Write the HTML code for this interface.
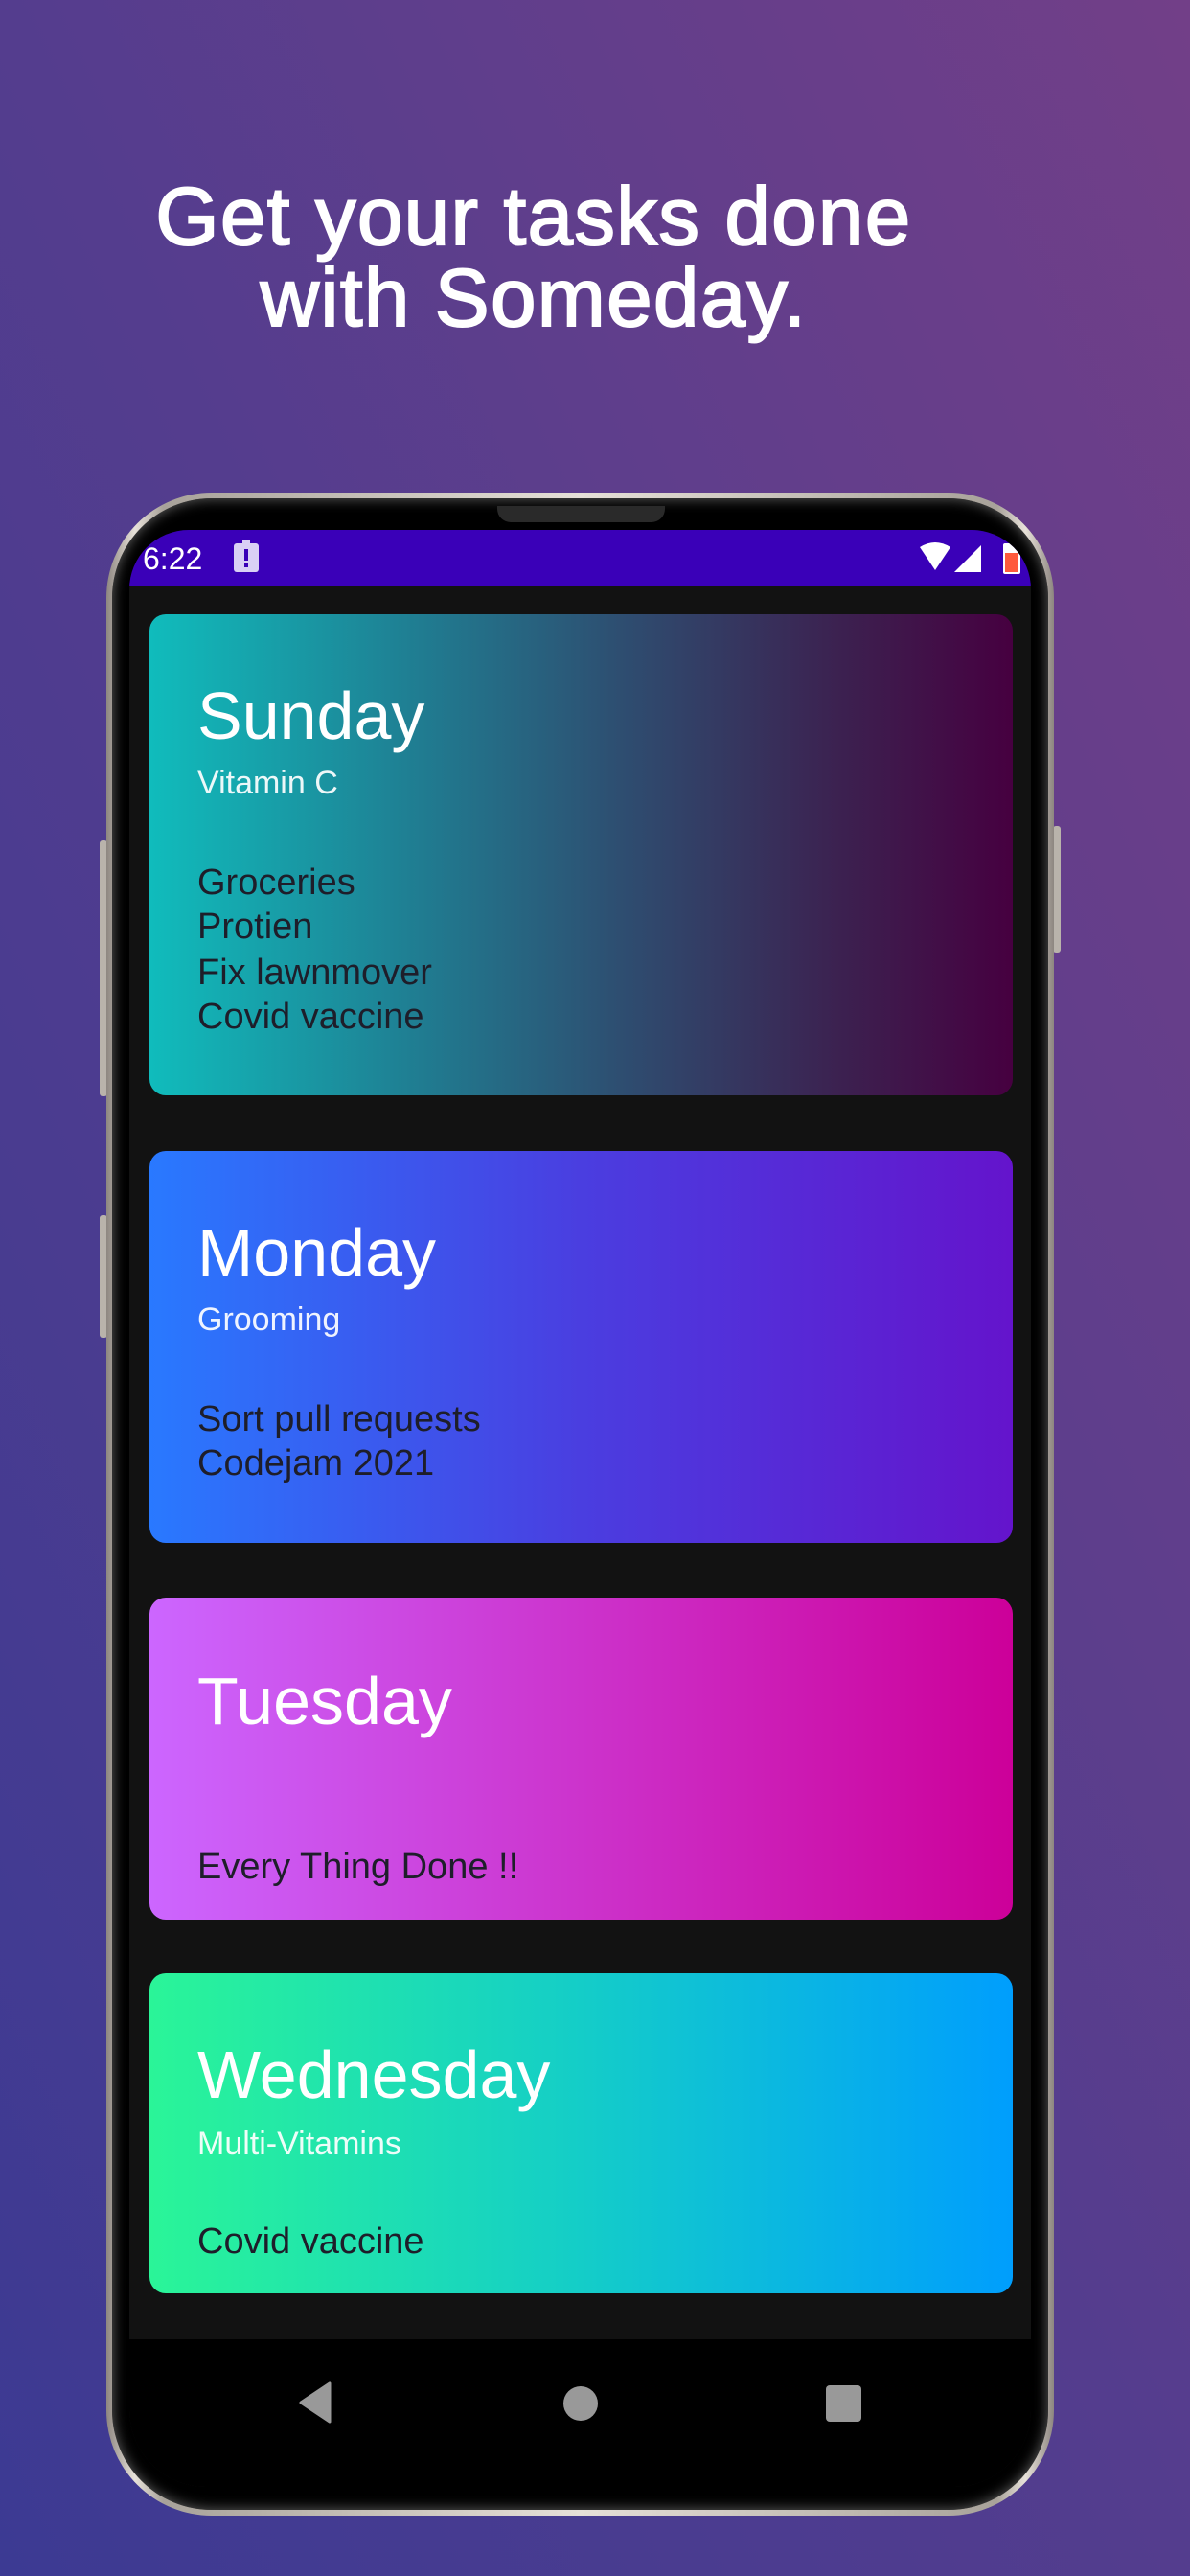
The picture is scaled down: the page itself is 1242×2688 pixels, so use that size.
<!DOCTYPE html>
<html><head><meta charset="utf-8"><style>
*{margin:0;padding:0;box-sizing:border-box}
body{width:1242px;height:2688px;overflow:hidden;position:relative;font-family:"Liberation Sans",sans-serif;
background:linear-gradient(to top right,#3c3a93 0%,#543d8e 50%,#723f88 100%);}
.h{position:absolute;left:0;width:1114px;text-align:center;color:#fff;font-size:85px;font-weight:normal;-webkit-text-stroke:2px #fff;letter-spacing:1.5px}
.frame{position:absolute;left:111px;top:514px;width:989px;height:2111px;border-radius:110px;
background:linear-gradient(90deg,#8d8680,#e8e2da 3%,#a8a29a 6%,#e6e0d8 50%,#a8a29a 94%,#e8e2da 97%,#8d8680);}
.bez{position:absolute;left:117px;top:520px;width:977px;height:2099px;border-radius:104px;background:#000;
box-shadow:inset 0 0 14px #666}
.screen{position:absolute;left:135px;top:553px;width:941px;height:2042px;border-radius:62px 62px 80px 80px;overflow:hidden;background:#121212}
.sb{position:absolute;left:0;top:0;width:941px;height:59px;background:#3a00b8}
.nav{position:absolute;left:0;top:1888px;width:941px;height:154px;background:#000}
.card{position:absolute;left:21px;width:901px;border-radius:17px;overflow:hidden}
.t{position:absolute;left:50px;white-space:nowrap;line-height:1}
.ti{font-size:70px;color:#fff}
.su{font-size:34px;color:rgba(255,255,255,.92)}
.li{font-size:38px;color:#1e1e2a}
.btn{position:absolute;background:#b9b3ab;border-radius:3px}
</style></head><body>
<div class="h" style="top:178px">Get your tasks done</div>
<div class="h" style="top:263px">with Someday.</div>

<div class="btn" style="left:104px;top:877px;width:8px;height:267px"></div>
<div class="btn" style="left:104px;top:1268px;width:8px;height:128px"></div>
<div class="btn" style="left:1099px;top:862px;width:8px;height:132px"></div>
<div class="frame"></div>
<div class="bez"></div>
<div style="position:absolute;left:519px;top:528px;width:175px;height:17px;border-radius:0 0 14px 14px;background:#2a2a2a"></div>
<div class="screen">
  <div class="sb">
    <div style="position:absolute;left:14px;top:12px;color:#fff;font-size:32px">6:22</div>
    <div style="position:absolute;left:109px;top:14px;width:26px;height:30px;background:#d9d0f5;border-radius:3px"></div>
    <div style="position:absolute;left:118px;top:10px;width:8px;height:6px;background:#d9d0f5"></div>
    <div style="position:absolute;left:120px;top:20px;width:4px;height:12px;background:#3a00b8"></div>
    <div style="position:absolute;left:120px;top:35px;width:4px;height:4px;background:#3a00b8"></div>
    <svg style="position:absolute;left:823px;top:12px" width="90" height="36" viewBox="0 0 90 36">
      <path d="M2 6 Q18 -4 34 6 L18 30 Z" fill="#fff"/>
      <path d="M66 4 L66 32 L38 32 Z" fill="#fff"/>
    </svg>
    <div style="position:absolute;left:912px;top:14px;width:18px;height:32px;background:#fff;border-radius:2px"></div>
    <div style="position:absolute;left:914px;top:24px;width:14px;height:20px;background:#ff5a3c"></div>
  </div>

  <div class="card" style="top:88px;height:502px;background:linear-gradient(90deg,#10bcbc 0%,#1f7f93 30%,#2e4d70 55%,#3c2150 80%,#460040 100%)">
    <div class="t ti" style="top:71px">Sunday</div>
    <div class="t su" style="top:159px">Vitamin C</div>
    <div class="t li" style="top:261px">Groceries</div>
    <div class="t li" style="top:307px">Protien</div>
    <div class="t li" style="top:355px">Fix lawnmover</div>
    <div class="t li" style="top:401px">Covid vaccine</div>
  </div>
  <div class="card" style="top:648px;height:409px;background:linear-gradient(90deg,#2979ff 0%,#4a3ee0 50%,#6414cc 100%)">
    <div class="t ti" style="top:71px">Monday</div>
    <div class="t su" style="top:159px">Grooming</div>
    <div class="t li" style="top:261px">Sort pull requests</div>
    <div class="t li" style="top:307px">Codejam 2021</div>
  </div>
  <div class="card" style="top:1114px;height:336px;background:linear-gradient(90deg,#cc66ff 0%,#cc33cc 50%,#cc0099 100%)">
    <div class="t ti" style="top:73px">Tuesday</div>
    <div class="t li" style="top:262px">Every Thing Done !!</div>
  </div>
  <div class="card" style="top:1506px;height:334px;background:linear-gradient(90deg,#2af598 0%,#14cdc8 50%,#009efd 100%)">
    <div class="t ti" style="top:71px">Wednesday</div>
    <div class="t su" style="top:161px">Multi-Vitamins</div>
    <div class="t li" style="top:261px">Covid vaccine</div>
  </div>

  <div class="nav">
    <svg style="position:absolute;left:175px;top:44px" width="40" height="44" viewBox="0 0 40 44"><path d="M34 2 L34 42 L4 22 Z" fill="#999" stroke="#999" stroke-width="3" stroke-linejoin="round"/></svg>
    <div style="position:absolute;left:453px;top:49px;width:36px;height:36px;border-radius:50%;background:#999"></div>
    <div style="position:absolute;left:727px;top:48px;width:37px;height:38px;border-radius:4px;background:#999"></div>
  </div>
</div>
</body></html>
